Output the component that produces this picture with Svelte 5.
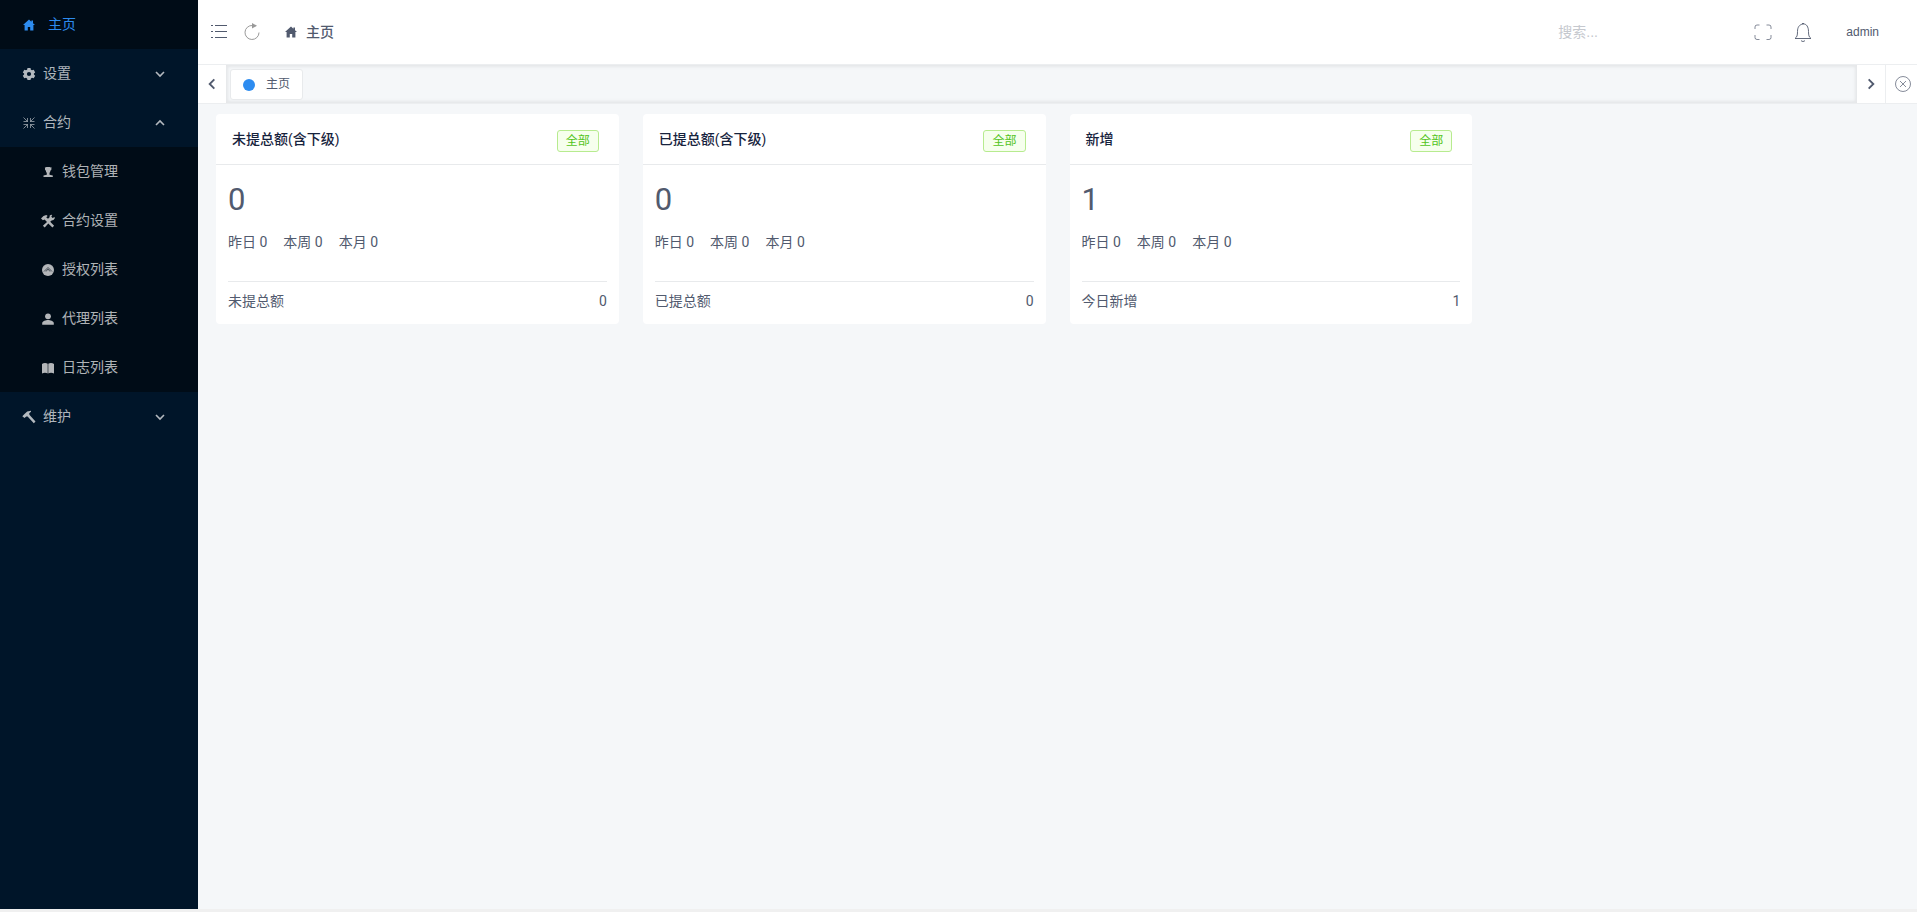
<script>
	let contractOpen = $state(true);
	let search = $state('');

	const children = [
		{ icon: 'wallet', label: '钱包管理' },
		{ icon: 'tools', label: '合约设置' },
		{ icon: 'auth', label: '授权列表' },
		{ icon: 'person', label: '代理列表' },
		{ icon: 'book', label: '日志列表' }
	];

	const cards = [
		{ title: '未提总额(含下级)', total: 0, day: 0, week: 0, month: 0, label: '未提总额', value: 0 },
		{ title: '已提总额(含下级)', total: 0, day: 0, week: 0, month: 0, label: '已提总额', value: 0 },
		{ title: '新增', total: 1, day: 0, week: 0, month: 0, label: '今日新增', value: 1 }
	];
</script>

{#snippet icon(name)}
	<svg class="icon" viewBox="0 0 14 14" aria-hidden="true">
		{#if name === 'home'}
			<path d="M7 1.5 1 7h1.6v5.5h3.2V9h2.4v3.5h3.2V7H13L11 5.2V2.6H9.4v1.1z" />
		{:else if name === 'gear'}
			<path
				fill-rule="evenodd"
				d="M5.5 1h3l.4 1.7 1.1.6 1.7-.5 1.5 2.6-1.3 1.2v1l1.3 1.2-1.5 2.5-1.7-.5-1.1.7L8.5 13h-3l-.4-1.5-1.1-.7-1.7.5L.8 8.8l1.3-1.2v-1L.8 5.4l1.5-2.6 1.7.5 1.1-.6zM7 4.9a2.1 2.1 0 1 0 0 4.2 2.1 2.1 0 0 0 0-4.2z"
			/>
		{:else if name === 'contract'}
			<path
				class="line"
				d="M1.5 1.5l4 4M12.5 1.5l-4 4M1.5 12.500l4-4M12.5 12.5l-4-4M1.500 5.500h4V2M12.500 5.500h-4V2M1.500 8.500h4V12M12.500 8.500h-4V12"
			/>
		{:else if name === 'wallet'}
			<path d="M4.300 2.500 5.500 2h3.200l1 .5.8-.2-.2 2.700-.8.400-.5 1.800-.5.500V9.700l3.300.8V12H2.500v-1.500l3.300-.8V7.700l-.6-.5-.4-1.800-.7-.4-.2-2.700z" />
		{:else if name === 'tools'}
			<path
				d="M0 4.500 2.500 2 5.300 1l1.400 1-1.500 1.300 1.800 1.500 1.600-1.500.1-1.700L10.300.7l.9.2-.9 1.800 1.300 1.200 2-.9.2 1.200-1.300 1.900-1.900.5-1.400 1.200 3.900 3.900-1.700 1.700-4.100-4-3.600 4-1.800-1.600 4.100-3.900L3.600 5.600 1.900 6.300z"
			/>
		{:else if name === 'auth'}
			<path d="M7 1a6 6 0 1 0 0 12A6 6 0 0 0 7 1z" />
			<path class="cut" d="M3 8.500 7 4.500l4 4M5 8.500 7 6l2 2.500" />
		{:else if name === 'person'}
			<circle cx="7" cy="4.300" r="2.900" />
			<path d="M1.200 12.700V11c.3-2 3.500-3 5.800-3s5.500 1 5.800 3v1.700z" />
		{:else if name === 'book'}
			<path d="M1 3c1.500-1.200 4.400-1.200 5.700-.2v9.800C5.300 11.600 3 11.600 1 12.500zM7.300 2.800C8.600 1.800 11.500 1.800 13 3v9.500c-2-.9-4.300-.9-5.700.1z" />
		{:else if name === 'hammer'}
			<path d="M.3 6.200 2.500 4 5.200 1.500 9 .8v1L7.200 3.200l.2 1.500 6.100 6.800-1.700 1.700-6.200-6.700-1.400-.1-1.700 1.600z" />
		{/if}
	</svg>
{/snippet}

{#snippet chevron(dir)}
	<svg class="chevron {dir}" viewBox="0 0 12 12" aria-hidden="true">
		<path d="m2 4 4 4 4-4" />
	</svg>
{/snippet}

<div class="layout">
	<aside>
		<nav>
			<a class="item home" href="#home">{@render icon('home')}<span>主页</span></a>
			<button class="item">{@render icon('gear')}<span>设置</span>{@render chevron('down')}</button>
			<button
				class="item"
				aria-expanded={contractOpen}
				onclick={() => (contractOpen = !contractOpen)}
			>
				{@render icon('contract')}<span>合约</span>{@render chevron(contractOpen ? 'up' : 'down')}
			</button>
			{#if contractOpen}
				<div class="submenu">
					{#each children as child}
						<a class="item" href="#{child.icon}">{@render icon(child.icon)}<span>{child.label}</span></a>
					{/each}
				</div>
			{/if}
			<button class="item">{@render icon('hammer')}<span>维护</span>{@render chevron('down')}</button>
		</nav>
	</aside>

	<div class="main">
		<header>
			<button class="tool" aria-label="菜单">
				<svg class="thin" viewBox="0 0 18 18">
					<path d="M5 2.5h12M5 8.5h12M5 14.5h12M1 2.500h2M1 8.500h2M1 14.500h2" />
				</svg>
			</button>
			<button class="tool refresh" aria-label="刷新">
				<svg class="thin" viewBox="0 0 18 18">
					<path d="M9.500 2.500A7 7 0 1 0 16 9.500" />
					<path class="solid" d="M9 0v5.500l5-2.700z" />
				</svg>
			</button>
			<a class="crumb" href="#home">{@render icon('home')}<span>主页</span></a>
			<input type="text" placeholder="搜索..." aria-label="搜索" bind:value={search} />
			<button class="tool faint" aria-label="全屏">
				<svg class="thin" viewBox="0 0 18 18">
					<path d="M1 6V4a2 2 0 0 1 2-2h2.500M12.500 2H15a2 2 0 0 1 2 2v2M17 12v2.500a2 2 0 0 1-2 2h-2.500M5.500 16.500H3a2 2 0 0 1-2-2V12" />
				</svg>
			</button>
			<button class="tool bell" aria-label="通知">
				<svg class="thin" viewBox="0 0 18 20">
					<path d="M1 16.500c2-1.500 2.500-3 2.500-7C3.500 5 5.500 2.500 9 2s5.500 3 5.500 7.500c0 4 .5 5.500 2.500 7zM7 18.500c1 1.300 3 1.300 4 0M8 1.500h2" />
				</svg>
			</button>
			<button class="user">admin</button>
		</header>

		<div class="tabs">
			<button class="scroll" aria-label="向左">{@render chevron('left')}</button>
			<div class="track">
				<button class="tab"><i></i>主页</button>
			</div>
			<button class="scroll" aria-label="向右">{@render chevron('right')}</button>
			<button class="scroll close faint" aria-label="关闭">
				<svg class="thin" viewBox="0 0 18 18">
					<circle cx="9" cy="9" r="7.500" />
					<path d="m6 6 6 6M12 6l-6 6" />
				</svg>
			</button>
		</div>

		<main>
			{#each cards as card}
				<section class="card">
					<div class="head">
						<h2>{card.title}</h2>
						<span class="tag">全部</span>
					</div>
					<div class="body">
						<p class="total">{card.total}</p>
						<p class="periods">
							<span>昨日 {card.day}</span>
							<span>本周 {card.week}</span>
							<span>本月 {card.month}</span>
						</p>
						<p class="foot"><span>{card.label}</span><span>{card.value}</span></p>
					</div>
				</section>
			{/each}
		</main>
	</div>
</div>

<style>
	:global(body) {
		background: #f0f0f0;
	}

	.layout {
		display: flex;
		min-height: calc(100vh - 3px);
		background: #f5f7f9;
		color: #515a6e;
		font: 14px/21px 'Liberation Sans', 'Noto Sans CJK SC', sans-serif;
	}

	button,
	input {
		margin: 0;
		padding: 0;
		border: 0;
		background: none;
		color: inherit;
		font: inherit;
	}

	button {
		cursor: pointer;
	}

	a {
		color: inherit;
		text-decoration: none;
	}

	svg {
		display: block;
		flex: none;
	}

	aside {
		flex: none;
		width: 198px;
		background: #001529;
		color: rgba(255, 255, 255, 0.7);
	}

	.item {
		display: flex;
		align-items: center;
		box-sizing: border-box;
		width: 100%;
		height: 49px;
		padding: 0 32px 0 22px;
		gap: 7px;
	}

	.item.home {
		gap: 12px;
		background: #000c17;
		color: #2d8cf0;
	}

	.submenu {
		background: #000c17;
	}

	.submenu .item {
		padding-left: 41px;
	}

	.icon {
		width: 14px;
		height: 14px;
		fill: currentColor;
	}

	.icon .line {
		fill: none;
		stroke: currentColor;
		stroke-width: 0.7;
	}

	.icon .cut {
		fill: none;
		stroke: #000c17;
		opacity: 0.6;
	}

	.chevron {
		width: 12px;
		height: 12px;
		fill: none;
		stroke: currentColor;
		stroke-width: 1.6;
	}

	.item .chevron {
		margin-left: auto;
	}

	.scroll .chevron {
		width: 14px;
		height: 14px;
	}

	.up {
		rotate: 180deg;
	}

	.left {
		rotate: 90deg;
	}

	.right {
		rotate: -90deg;
	}

	.main {
		flex: 1;
		min-width: 0;
	}

	header {
		display: flex;
		align-items: center;
		height: 64px;
		padding: 0 38px 0 12px;
		background: #fff;
		border-bottom: 1px solid #eceef0;
	}

	.thin {
		width: 18px;
		height: 18px;
		fill: none;
		stroke: currentColor;
	}

	.faint .thin {
		stroke-width: 0.7;
	}

	.refresh {
		margin-left: 15px;
		color: #999;
	}

	.thin .solid {
		fill: currentColor;
		stroke: none;
	}

	.crumb {
		display: flex;
		align-items: center;
		gap: 8px;
		margin-left: 23px;
		font-weight: 500;
	}

	input {
		width: 196px;
		margin-left: auto;
		outline: 0;
	}

	input::placeholder {
		color: #c5c8ce;
		opacity: 1;
	}

	.bell {
		margin-left: 22px;
	}

	.bell svg {
		height: 20px;
		stroke-width: 0.9;
	}

	.user {
		margin-left: 34px;
		font-size: 12px;
	}

	.tabs {
		display: flex;
		height: 38px;
		background: #fff;
		border-bottom: 1px solid #eceef0;
	}

	.scroll {
		display: grid;
		place-items: center;
		width: 28px;
	}

	.close {
		width: 32px;
		padding-left: 2px;
		border-left: 1px solid #eceef0;
	}

	.track {
		flex: 1;
		box-sizing: border-box;
		padding: 4px;
		background: #f5f7f9;
		box-shadow: inset 0 0 3px 2px rgba(100, 100, 100, 0.1);
	}

	.tab {
		display: flex;
		align-items: center;
		gap: 11px;
		height: 31px;
		padding: 0 12px;
		background: #fff;
		border: 1px solid #e8eaec;
		border-radius: 3px;
		font-size: 12px;
	}

	.tab i {
		width: 12px;
		height: 12px;
		border-radius: 50%;
		background: #2d8cf0;
	}

	main {
		display: grid;
		grid-template-columns: repeat(4, 1fr);
		gap: 24px;
		padding: 10px 18px;
	}

	.card {
		background: #fff;
		border-radius: 4px;
	}

	.head {
		display: flex;
		align-items: center;
		justify-content: space-between;
		height: 50px;
		padding: 0 20px 0 16px;
		border-bottom: 1px solid #e8eaec;
	}

	h2 {
		margin: 0;
		color: #17233d;
		font-size: 14px;
		font-weight: 500;
	}

	.tag {
		margin-top: 4px;
		padding: 0 8px;
		border: 1px solid #b7eb8f;
		border-radius: 3px;
		background: #f6ffed;
		color: #52c41a;
		font-size: 12px;
		line-height: 20px;
	}

	.body {
		padding: 12px;
		font-family: Roboto, 'Noto Sans CJK SC', sans-serif;
	}

	p {
		margin: 0;
	}

	.total {
		font-size: 31px;
		line-height: 45px;
	}

	.periods {
		display: flex;
		gap: 16px;
		padding: 10px 0 28px;
	}

	.foot {
		display: flex;
		justify-content: space-between;
		padding-top: 9px;
		border-top: 1px solid #e8eaec;
	}
</style>
